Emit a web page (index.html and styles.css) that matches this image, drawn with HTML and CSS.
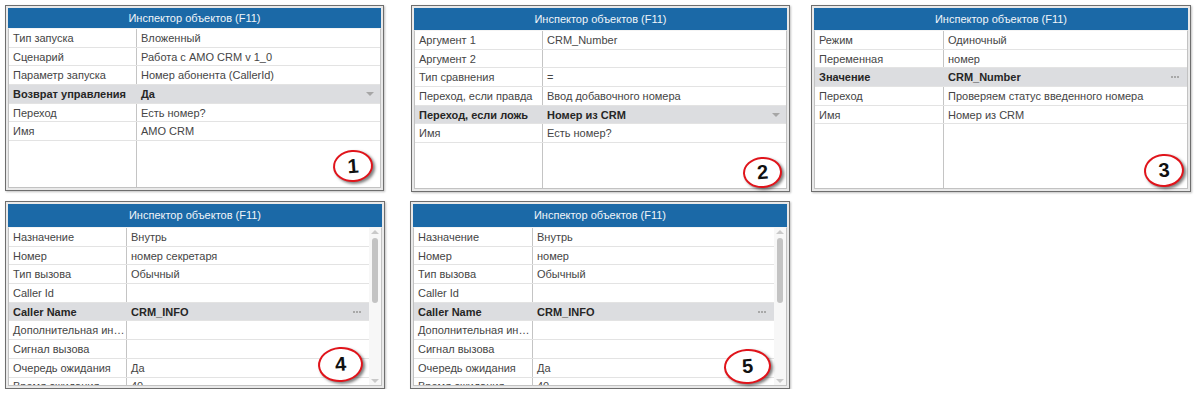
FILE: index.html
```html
<!DOCTYPE html>
<html lang="ru">
<head>
<meta charset="utf-8">
<title>Инспектор объектов</title>
<link rel="stylesheet" href="styles.css">
</head>
<body>
<div class="page">
  <div class="line">
    <section class="panel p1">
      <div class="head">Инспектор объектов (F11)</div>
      <div class="body">
        <div class="grid">
          <div class="row"><div class="k">Тип запуска</div><div class="v">Вложенный</div></div>
          <div class="row"><div class="k">Сценарий</div><div class="v">Работа с АМО CRM v 1_0</div></div>
          <div class="row"><div class="k">Параметр запуска</div><div class="v">Номер абонента (CallerId)</div></div>
          <div class="row sel"><div class="k">Возврат управления</div><div class="v">Да<span class="drop"></span></div></div>
          <div class="row"><div class="k">Переход</div><div class="v">Есть номер?</div></div>
          <div class="row"><div class="k">Имя</div><div class="v">АМО CRM</div></div>
        </div>
      </div>
      <div class="mark m1">1</div>
    </section>
    <section class="panel p2">
      <div class="head">Инспектор объектов (F11)</div>
      <div class="body">
        <div class="grid">
          <div class="row"><div class="k">Аргумент 1</div><div class="v">CRM_Number</div></div>
          <div class="row"><div class="k">Аргумент 2</div><div class="v"></div></div>
          <div class="row"><div class="k">Тип сравнения</div><div class="v">=</div></div>
          <div class="row"><div class="k">Переход, если правда</div><div class="v">Ввод добавочного номера</div></div>
          <div class="row sel"><div class="k">Переход, если ложь</div><div class="v">Номер из CRM<span class="drop"></span></div></div>
          <div class="row"><div class="k">Имя</div><div class="v">Есть номер?</div></div>
        </div>
      </div>
      <div class="mark m2">2</div>
    </section>
    <section class="panel p3">
      <div class="head">Инспектор объектов (F11)</div>
      <div class="body">
        <div class="grid">
          <div class="row"><div class="k">Режим</div><div class="v">Одиночный</div></div>
          <div class="row"><div class="k">Переменная</div><div class="v">номер</div></div>
          <div class="row sel"><div class="k">Значение</div><div class="v">CRM_Number<span class="dots"></span></div></div>
          <div class="row"><div class="k">Переход</div><div class="v">Проверяем статус введенного номера</div></div>
          <div class="row"><div class="k">Имя</div><div class="v">Номер из CRM</div></div>
        </div>
      </div>
      <div class="mark m3">3</div>
    </section>
  </div>
  <div class="line line2">
    <section class="panel p4">
      <div class="head">Инспектор объектов (F11)</div>
      <div class="body">
        <div class="grid">
          <div class="row"><div class="k">Назначение</div><div class="v">Внутрь</div></div>
          <div class="row"><div class="k">Номер</div><div class="v">номер секретаря</div></div>
          <div class="row"><div class="k">Тип вызова</div><div class="v">Обычный</div></div>
          <div class="row"><div class="k">Caller Id</div><div class="v"></div></div>
          <div class="row sel"><div class="k">Caller Name</div><div class="v">CRM_INFO<span class="dots"></span></div></div>
          <div class="row"><div class="k">Дополнительная информация</div><div class="v"></div></div>
          <div class="row"><div class="k">Сигнал вызова</div><div class="v"></div></div>
          <div class="row"><div class="k">Очередь ожидания</div><div class="v">Да</div></div>
          <div class="row"><div class="k">Время ожидания</div><div class="v">40</div></div>
        </div>
        <div class="scroll"><span class="up"></span><span class="thumb"></span><span class="fill"></span><span class="down"></span></div>
      </div>
      <div class="mark m4">4</div>
    </section>
    <section class="panel p5">
      <div class="head">Инспектор объектов (F11)</div>
      <div class="body">
        <div class="grid">
          <div class="row"><div class="k">Назначение</div><div class="v">Внутрь</div></div>
          <div class="row"><div class="k">Номер</div><div class="v">номер</div></div>
          <div class="row"><div class="k">Тип вызова</div><div class="v">Обычный</div></div>
          <div class="row"><div class="k">Caller Id</div><div class="v"></div></div>
          <div class="row sel"><div class="k">Caller Name</div><div class="v">CRM_INFO<span class="dots"></span></div></div>
          <div class="row"><div class="k">Дополнительная информация</div><div class="v"></div></div>
          <div class="row"><div class="k">Сигнал вызова</div><div class="v"></div></div>
          <div class="row"><div class="k">Очередь ожидания</div><div class="v">Да</div></div>
          <div class="row"><div class="k">Время ожидания</div><div class="v">40</div></div>
        </div>
        <div class="scroll"><span class="up"></span><span class="thumb"></span><span class="fill"></span><span class="down"></span></div>
      </div>
      <div class="mark m5">5</div>
    </section>
  </div>
</div>
</body>
</html>
```

FILE: styles.css
```css
* { box-sizing: border-box; }

body {
  margin: 0;
  background: #ffffff;
  font-family: "Liberation Sans", Arial, sans-serif;
  font-size: 11px;
  color: #454545;
}

.page { padding: 5px 0 0 5px; }

.line { display: flex; align-items: flex-start; }
.line2 { margin-top: 9px; }

.panel {
  position: relative;
  display: flex;
  flex-direction: column;
  border: 1px solid #6e6e6e;
  padding: 2px;
  background: #e9e9e9;
  box-shadow: 1px 1px 2px rgba(0, 0, 0, 0.25);
}

.p1 { width: 379px; height: 186px; --kw: 127px; }
.p2 { width: 379px; height: 187px; margin-left: 27px; --kw: 127px; }
.p3 { width: 380px; height: 187px; margin-left: 21px; --kw: 128px; }
.p4 { width: 380px; height: 188px; --kw: 117px; }
.p5 { width: 380px; height: 188px; margin-left: 25px; --kw: 118px; }

.head {
  flex: none;
  height: 20px;
  line-height: 20px;
  background: #1b69a7;
  color: #f1f5f9;
  text-align: center;
}
.p2 .head, .p3 .head { height: 22px; line-height: 22px; }
.p4 .head, .p5 .head { height: 23px; line-height: 23px; }

.body {
  flex: 1;
  min-height: 0;
  display: flex;
  overflow: hidden;
  background: #ffffff;
  border: 1px solid #c2c2c2;
  border-top: 1px solid #f4f4f4;
}

.grid {
  flex: 1;
  min-width: 0;
  background-image: linear-gradient(#c4c4c4, #c4c4c4);
  background-repeat: no-repeat;
  background-size: 1px 100%;
  background-position: var(--kw) 0;
}

.row {
  display: grid;
  grid-template-columns: var(--kw) 1fr;
  height: 18.7px;
  border-bottom: 1px solid #e3e3e3;
  align-items: center;
}

.k {
  padding-left: 4px;
  padding-right: 0;
  white-space: nowrap;
  overflow: hidden;
  text-overflow: ellipsis;
}

.v {
  display: flex;
  align-items: center;
  justify-content: space-between;
  padding-left: 5px;
  padding-right: 6px;
  white-space: nowrap;
}

.sel {
  background: #dcdde0;
  font-weight: bold;
  color: #262626;
}

.drop {
  width: 0;
  height: 0;
  border-left: 4px solid transparent;
  border-right: 4px solid transparent;
  border-top: 4px solid #a6a6a6;
}

.dots {
  width: 2px;
  height: 2px;
  margin-right: 8px;
  background: #a8a8a8;
  box-shadow: 3px 0 #a8a8a8, 6px 0 #a8a8a8;
}

.scroll {
  flex: none;
  width: 12px;
  display: flex;
  flex-direction: column;
  align-items: center;
  background: #f7f7f7;
}
.scroll .up {
  margin-top: 2px;
  width: 0;
  height: 0;
  border-left: 4px solid transparent;
  border-right: 4px solid transparent;
  border-bottom: 4px solid #c9c9c9;
}
.scroll .thumb {
  margin-top: 4px;
  width: 6px;
  height: 65px;
  border-radius: 3px;
  background: #c3c3c3;
}
.scroll .fill { flex: 1; }
.scroll .down {
  margin-bottom: 2px;
  width: 0;
  height: 0;
  border-left: 4px solid transparent;
  border-right: 4px solid transparent;
  border-top: 4px solid #c9c9c9;
}

.mark {
  position: absolute;
  display: flex;
  align-items: center;
  justify-content: center;
  border: 2.5px solid #e0141b;
  border-radius: 50%;
  background: #ffffff;
  box-shadow: 2px 2px 3px rgba(0, 0, 0, 0.5);
  font-family: "Liberation Sans", Arial, sans-serif;
  font-weight: bold;
  font-size: 20px;
  color: #111111;
  transform: rotate(-4deg);
}
.m1 { left: 327px; top: 144px; width: 40px; height: 32px; }
.m2 { left: 331px; top: 151px; width: 39px; height: 31px; }
.m3 { left: 332px; top: 148px; width: 40px; height: 33px; }
.m4 { left: 312px; top: 145px; width: 45px; height: 35px; }
.m5 { left: 313px; top: 147px; width: 47px; height: 35px; }
```
